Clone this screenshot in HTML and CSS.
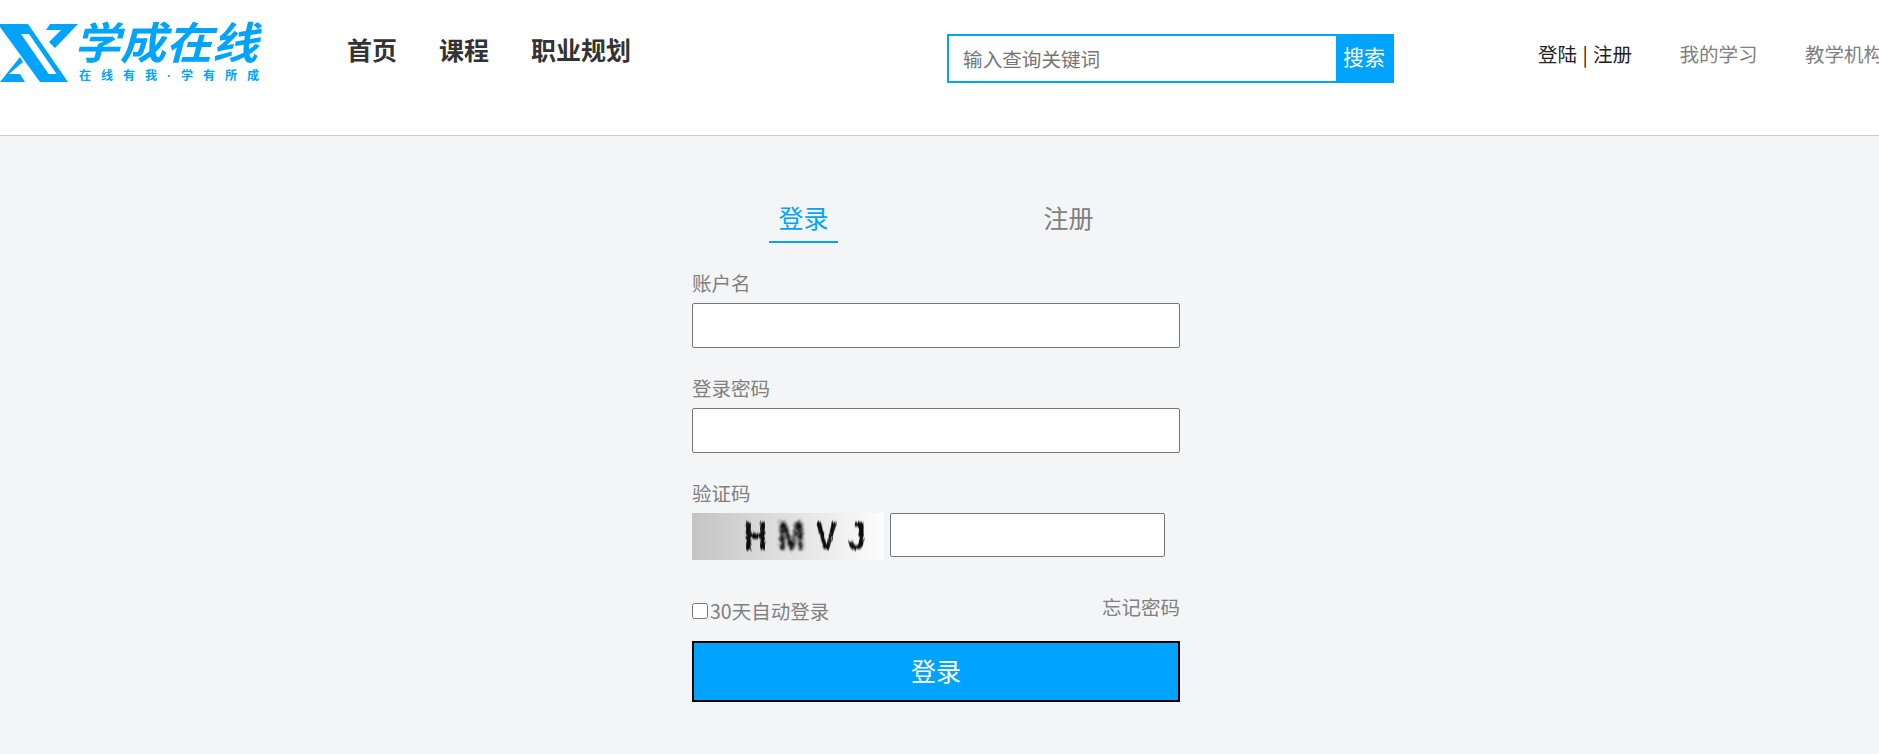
FILE: index.html
```html
<!DOCTYPE html>
<html lang="zh-CN">
<head>
  <meta charset="UTF-8" />
  <meta name="viewport" content="width=device-width, initial-scale=1" />
  <title>学成在线 - 登录</title>
  <link rel="stylesheet" href="styles.css">
</head>
<body>
  <div class="header">
    <a class="logo" href="#">
      <svg class="logo-mark" width="79" height="58" viewBox="0 0 79 58">
        <path d="M0 0H28L68 58H40L0 3Z M21 10H29L56.6 50H48.6Z" fill="#00a4ff" fill-rule="evenodd"/>
        <path d="M0 58L20 33L23 38L9 50H20L25 58Z" fill="#00a4ff"/>
        <path d="M50 0H78L55 24L49 18L61 6H46Z" fill="#00a4ff"/>
      </svg>
      <div class="logo-text">
        <div class="logo-title">学成在线</div>
        <div class="logo-slogan">在线有我·学有所成</div>
      </div>
    </a>
    <div class="nav">
      <a href="#">首页</a>
      <a href="#">课程</a>
      <a href="#">职业规划</a>
    </div>
    <div class="search">
      <input class="search-input" type="text" placeholder="输入查询关键词" />
      <button class="search-btn">搜索</button>
    </div>
    <div class="user-links">
      <a class="login-link" href="#">登陆 | 注册</a>
      <a href="#">我的学习</a>
      <a href="#">教学机构</a>
    </div>
  </div>

  <div class="login-box">
    <div class="tabs">
      <a class="tab active" href="#">登录</a>
      <a class="tab" href="#">注册</a>
    </div>

    <label class="field-label" for="username">账户名</label>
    <input class="field" id="username" type="text" />

    <label class="field-label" for="password">登录密码</label>
    <input class="field" id="password" type="password" />

    <label class="field-label" for="code">验证码</label>
    <div class="code-row">
      <div class="captcha"><span>H</span><span class="noisy">M</span><span>V</span><span>J</span></div>
      <input class="code-input" id="code" type="text" />
    </div>

    <div class="options">
      <label class="remember"><input type="checkbox" />30天自动登录</label>
      <a class="forgot" href="#">忘记密码</a>
    </div>

    <button class="submit-btn">登录</button>
  </div>

  <!-- 验证码文字的噪点效果 -->
  <svg class="filters" width="0" height="0">
    <filter id="rough">
      <feTurbulence type="fractalNoise" baseFrequency="0.5" numOctaves="2" seed="3"/>
      <feDisplacementMap in="SourceGraphic" scale="3.5"/>
      <feGaussianBlur stdDeviation="0.7"/>
    </filter>
    <filter id="noisy">
      <feTurbulence type="fractalNoise" baseFrequency="0.8" numOctaves="2" seed="7"/>
      <feDisplacementMap in="SourceGraphic" scale="8"/>
      <feGaussianBlur stdDeviation="0.8"/>
    </filter>
  </svg>
</body>
</html>
```

FILE: styles.css
```css
* {
  box-sizing: border-box;
}
html, body {
  margin: 0;
  padding: 0;
  height: 100%;
}
body {
  font-family: "Noto Sans CJK SC", "Liberation Sans", sans-serif;
  background-color: #f3f5f7;
  overflow: hidden;
}
a {
  text-decoration: none;
  color: inherit;
}
.filters {
  position: absolute;
}

.header {
  display: flex;
  align-items: flex-start;
  height: 136px;
  background-color: #fff;
  border-bottom: 1px solid #ccc;
  white-space: nowrap;
  overflow: hidden;
}
.logo {
  display: flex;
  flex: none;
  width: 261px;
  height: 58px;
  margin-top: 24px;
  color: #00a4ff;
}
.logo-mark {
  flex: none;
}
.logo-text {
  flex: none;
  font-family: "Liberation Sans", "Noto Sans CJK SC", sans-serif;
}
.logo-title {
  width: 182px;
  height: 42px;
  margin-left: -5px;
  font-size: 46px;
  font-weight: 700;
  font-style: italic;
  line-height: 42px;
  transform: scaleY(0.95);
  transform-origin: left top;
}
.logo-slogan {
  margin-top: 3px;
  font-size: 12px;
  font-weight: 700;
  letter-spacing: 10px;
  line-height: 14px;
}
.nav {
  display: flex;
  flex: none;
  gap: 42px;
  margin-left: 86px;
  margin-top: 32px;
  font-size: 25px;
  font-weight: 700;
  line-height: 34px;
  color: #333;
}
.search {
  display: flex;
  flex: none;
  width: 447px;
  height: 49px;
  margin-left: 316px;
  margin-top: 34px;
  border: 2px solid #00a4ff;
}
.search-input {
  flex: 1;
  min-width: 0;
  padding: 0 14px;
  border: none;
  outline: none;
  font-family: inherit;
  font-size: 19.6px;
}
.search-input::placeholder {
  color: #757575;
}
.search-btn {
  width: 56px;
  padding: 0 0 6px;
  border: none;
  background-color: #00a4ff;
  color: #fff;
  font-family: inherit;
  font-size: 21px;
}
.user-links {
  display: flex;
  flex: none;
  gap: 47.5px;
  margin-left: 144px;
  margin-top: 40px;
  font-size: 19.5px;
  line-height: 28px;
  color: #808080;
}
.login-link {
  color: #222;
  word-spacing: 1px;
}

.login-box {
  width: 488px;
  margin-left: 692px;
  padding-top: 63px;
}
.tabs {
  display: flex;
  padding-left: 77px;
  gap: 196px;
  margin-bottom: 25px;
}
.tab {
  padding: 0 9.5px;
  height: 44px;
  font-size: 25px;
  line-height: 36px;
  color: #808080;
}
.tab.active {
  color: #00a4ff;
  border-bottom: 2px solid #00a4ff;
}
.field-label {
  display: block;
  font-size: 19.5px;
  line-height: 29px;
  margin-bottom: 6px;
  color: #808080;
}
.field {
  display: block;
  width: 100%;
  height: 45px;
  margin-bottom: 25px;
  border: 1px solid #767676;
  border-radius: 2px;
}
.code-row {
  display: flex;
  align-items: flex-start;
  gap: 6px;
}
.captcha {
  display: flex;
  flex: none;
  width: 192px;
  height: 47px;
  padding-left: 52px;
  gap: 11px;
  background: linear-gradient(90deg, #c4c4c4, #fdfdfd);
  font-family: "Liberation Sans", sans-serif;
  font-size: 32px;
  font-weight: 700;
  line-height: 47px;
  color: #111;
}
.captcha span {
  filter: url(#rough);
  transform: scaleY(1.25);
}
.captcha .noisy {
  filter: url(#noisy);
}
.code-input {
  width: 275px;
  height: 44px;
  border: 1px solid #767676;
  border-radius: 2px;
}
.options {
  display: flex;
  justify-content: space-between;
  align-items: flex-start;
  margin-top: 33px;
  font-size: 19.5px;
  line-height: 28px;
  color: #808080;
}
.remember {
  display: flex;
  align-items: center;
  margin-top: 4px;
}
.remember input {
  width: 16px;
  height: 16px;
  margin: 0 2px 0 0;
}
.submit-btn {
  display: block;
  width: 100%;
  height: 61px;
  margin-top: 16px;
  padding: 0 0 3px;
  border: 2px solid #000;
  background-color: #00a4ff;
  color: #fff;
  font-family: inherit;
  font-size: 25px;
}
```
